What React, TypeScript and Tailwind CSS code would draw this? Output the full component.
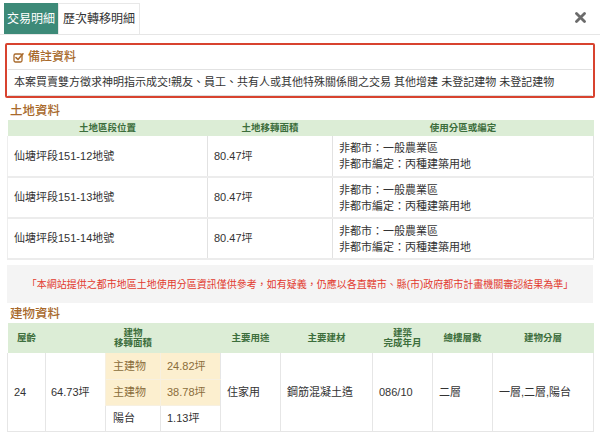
import React from "react";

const font = { fontFamily: '"Liberation Sans", "Noto Sans CJK TC", sans-serif' };

function CheckIcon() {
  return (
    <svg width="11" height="11" viewBox="0 0 11 11" className="shrink-0">
      <rect x="1" y="2" width="8" height="8" rx="1.5" fill="none" stroke="#a8692b" strokeWidth="1.3" />
      <path d="M3 5.6 L5 7.5 L10 1.8" fill="none" stroke="#a8692b" strokeWidth="1.6" strokeLinecap="round" strokeLinejoin="round" />
    </svg>
  );
}

function CloseIcon() {
  return (
    <svg width="11" height="11" viewBox="0 0 11 11">
      <path d="M1.5 1.5 L9.5 9.5 M9.5 1.5 L1.5 9.5" stroke="#6b6b6b" strokeWidth="2.8" strokeLinecap="round" />
    </svg>
  );
}

const landRows = ["仙塘坪段151-12地號", "仙塘坪段151-13地號", "仙塘坪段151-14地號"];

export default function App() {
  return (
    <div className="w-[600px] h-[448px] bg-white overflow-hidden text-[#333]" style={font}>
      {/* tabs */}
      <div className="flex items-end justify-between pl-[4px] pt-[3px] pr-[14px] border-b border-[#e6e6e6] h-[35px]">
        <div className="flex h-[31px]">
          <div className="w-[54px] flex items-center justify-center bg-[#3d8a78] text-white text-[12px]">交易明細</div>
          <div className="w-[82px] flex items-center justify-center bg-white border border-b-0 border-[#e8e8e8] text-[#333] text-[12px]">歷次轉移明細</div>
        </div>
        <div className="self-start mt-[9px]">
          <CloseIcon />
        </div>
      </div>

      {/* remark box */}
      <div className="mx-[5px] mt-[8px] border-[2px] border-[#d8432f] rounded-[2px] px-[1px]">
        <div className="h-[25px] flex items-center gap-[4px] pl-[5px] border-b border-[#e2e2e2]">
          <CheckIcon />
          <span className="text-[12px] text-[#a8692b] font-medium leading-none">備註資料</span>
        </div>
        <div className="h-[26px] flex items-center pl-[6px] text-[11px] border-b border-[#dcdcdc] whitespace-nowrap">
          本案買賣雙方徵求神明指示成交!親友、員工、共有人或其他特殊關係間之交易 其他增建 未登記建物 未登記建物
        </div>
      </div>

      <div className="px-[7px]">
        {/* land */}
        <div className="h-[22px] pt-[4px] flex items-center pl-[3px] text-[12.5px] font-medium text-[#a8692b]">土地資料</div>
        <table className="w-[586px] table-fixed border-collapse text-[11px]">
          <colgroup>
            <col className="w-[200px]" />
            <col className="w-[125px]" />
            <col className="w-[261px]" />
          </colgroup>
          <thead>
            <tr className="bg-[#dcedd6] text-[#3c6e3c] text-[9.5px] font-bold h-[16px]">
              <th className="font-bold leading-[16px] p-0">土地區段位置</th>
              <th className="font-bold leading-[16px] p-0">土地移轉面積</th>
              <th className="font-bold leading-[16px] p-0">使用分區或編定</th>
            </tr>
          </thead>
          <tbody>
            {landRows.map((r) => (
              <tr key={r} className="h-[41px] border-b-2 border-[#ececec]">
                <td className="px-[6px] border-l border-[#eeeeee]">{r}</td>
                <td className="px-[6px] border-l border-[#e2e2e2]">80.47坪</td>
                <td className="px-[6px] border-l border-r border-[#e2e2e2] leading-[16px]">
                  <div>非都市：一般農業區</div>
                  <div>非都市編定：丙種建築用地</div>
                </td>
              </tr>
            ))}
          </tbody>
        </table>

        {/* notice */}
        <div className="mt-[5px] h-[38px] bg-[#f4f4f4] flex items-center justify-center text-[10px] text-[#e23a2e] whitespace-nowrap">
          「本網站提供之都市地區土地使用分區資訊僅供參考，如有疑義，仍應以各直轄市、縣(市)政府都市計畫機關審認結果為準」
        </div>

        {/* building */}
        <div className="h-[20px] pt-[2px] flex items-center pl-[3px] text-[12.5px] font-medium text-[#a8692b]">建物資料</div>
        <table className="w-[586px] table-fixed border-collapse text-[11px]">
          <colgroup>
            <col className="w-[38px]" />
            <col className="w-[60px]" />
            <col className="w-[55px]" />
            <col className="w-[60px]" />
            <col className="w-[60px]" />
            <col className="w-[92px]" />
            <col className="w-[60px]" />
            <col className="w-[60px]" />
            <col className="w-[101px]" />
          </colgroup>
          <thead>
            <tr className="bg-[#dcedd6] text-[#3c6e3c] text-[9.5px] h-[30px]">
              <th className="font-bold leading-[10px] p-0">屋齡</th>
              <th colSpan={3} className="font-bold leading-[10px] p-0">建物<br />移轉面積</th>
              <th className="font-bold leading-[10px] p-0">主要用途</th>
              <th className="font-bold leading-[10px] p-0">主要建材</th>
              <th className="font-bold leading-[10px] p-0">建築<br />完成年月</th>
              <th className="font-bold leading-[10px] p-0">總樓層數</th>
              <th className="font-bold leading-[10px] p-0">建物分層</th>
            </tr>
          </thead>
          <tbody>
            <tr className="h-[26px]">
              <td rowSpan={3} className="px-[6px] border-l border-b border-[#e6e6e6]">24</td>
              <td rowSpan={3} className="px-[5px] border-l border-b border-[#e6e6e6]">64.73坪</td>
              <td className="px-[7px] bg-[#fcefcf] text-[#8a6d3b] border-l border-b border-[#f7f0e0]">主建物</td>
              <td className="px-[6px] bg-[#fcefcf] text-[#8a6d3b] border-l border-b border-[#f7f0e0]">24.82坪</td>
              <td rowSpan={3} className="px-[6px] border-l border-b border-[#e6e6e6]">住家用</td>
              <td rowSpan={3} className="px-[6px] border-l border-b border-[#e6e6e6]">鋼筋混凝土造</td>
              <td rowSpan={3} className="px-[6px] border-l border-b border-[#e6e6e6]">086/10</td>
              <td rowSpan={3} className="px-[6px] border-l border-b border-[#e6e6e6]">二層</td>
              <td rowSpan={3} className="px-[6px] border-l border-r border-b border-[#e6e6e6]">一層,二層,陽台</td>
            </tr>
            <tr className="h-[26px]">
              <td className="px-[7px] bg-[#fcefcf] text-[#8a6d3b] border-l border-b border-[#f7f0e0]">主建物</td>
              <td className="px-[6px] bg-[#fcefcf] text-[#8a6d3b] border-l border-b border-[#f7f0e0]">38.78坪</td>
            </tr>
            <tr className="h-[26px]">
              <td className="px-[7px] border-l border-b border-[#e6e6e6]">陽台</td>
              <td className="px-[6px] border-l border-b border-[#e6e6e6]">1.13坪</td>
            </tr>
          </tbody>
        </table>
      </div>
    </div>
  );
}
